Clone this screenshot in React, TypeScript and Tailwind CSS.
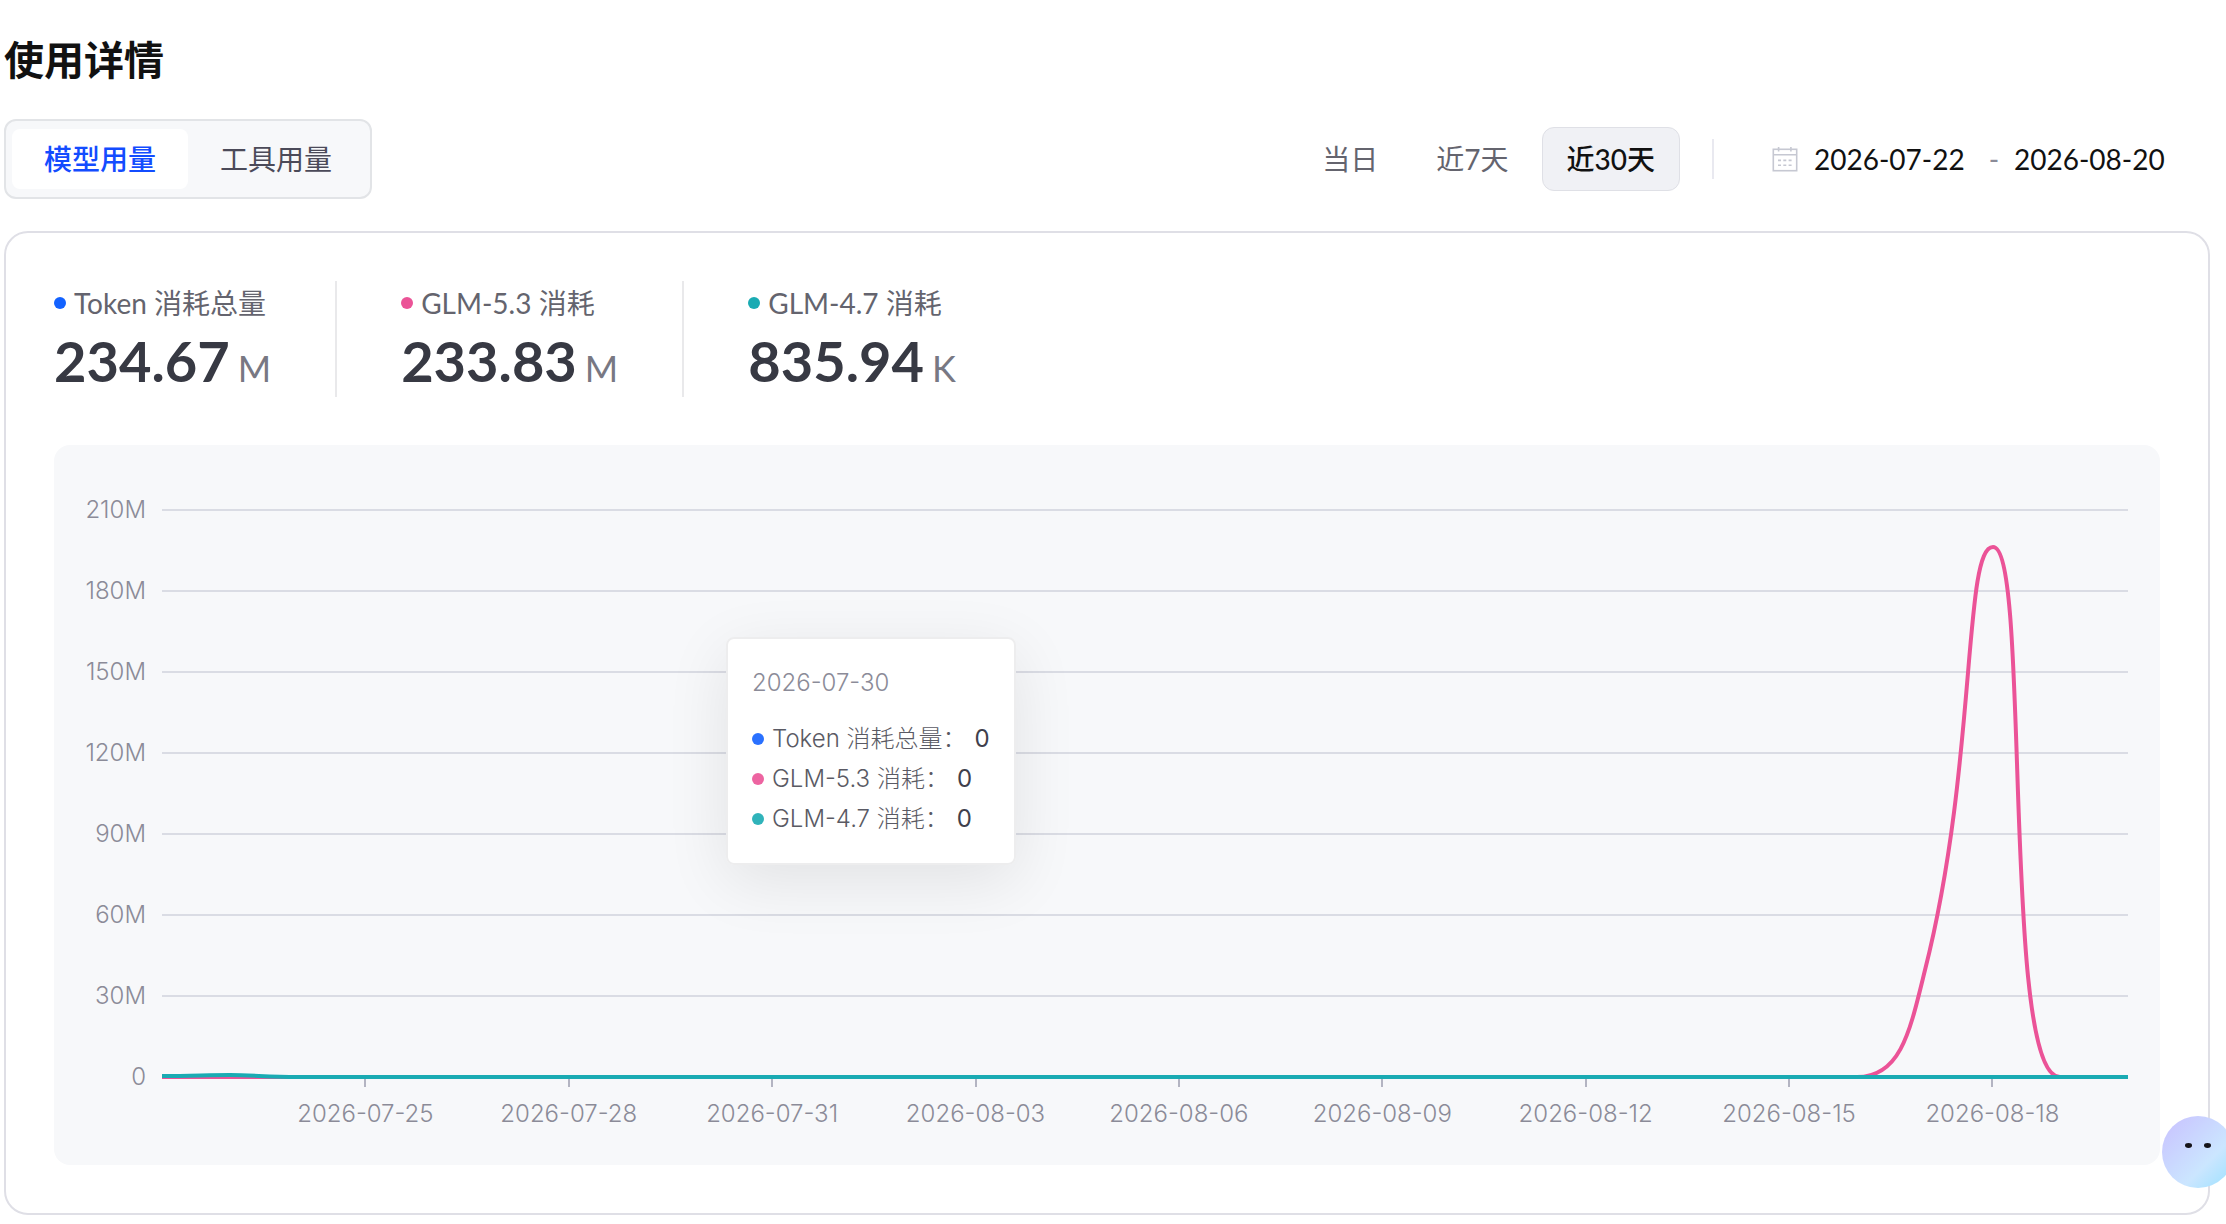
import React, { useState } from 'react';

interface Stat {
    label: string;
    value: string;
    unit: string;
    dot: string;
}

const STATS: Stat[] = [
    { label: 'Token 消耗总量', value: '234.67', unit: 'M', dot: 'bg-[#1362ff]' },
    { label: 'GLM-5.3 消耗', value: '233.83', unit: 'M', dot: 'bg-[#eb5397]' },
    { label: 'GLM-4.7 消耗', value: '835.94', unit: 'K', dot: 'bg-[#1aabb3]' },
];

const TABS = ['模型用量', '工具用量'];
const RANGES = ['当日', '近7天', '近30天'];

const Y_LABELS = ['210M', '180M', '150M', '120M', '90M', '60M', '30M', '0'];
const X_LABELS = [
    '2026-07-25',
    '2026-07-28',
    '2026-07-31',
    '2026-08-03',
    '2026-08-06',
    '2026-08-09',
    '2026-08-12',
    '2026-08-15',
    '2026-08-18',
];

function CalendarIcon() {
    return (
        <svg className="h-[26px] w-[26px] shrink-0" viewBox="0 0 26 26" fill="none" stroke="#c6c8d2" strokeWidth="1.6">
            <rect x="1.3" y="3.3" width="23.4" height="21.4" />
            <path d="M1.3 8.8h23.4M6.6 1v4.6M18.9 1v4.6" />
            <path d="M6 14.4h3M11.3 14.4h3M16.6 14.4h3M6 19.2h3M11.3 19.2h3M16.6 19.2h3" />
        </svg>
    );
}

function Assistant() {
    return (
        <button aria-label="智能助手" className="absolute -right-2 bottom-9 h-[72px] w-[72px]">
            <svg viewBox="0 0 72 72" className="h-full w-full">
                <defs>
                    <linearGradient id="face" x1="0.15" y1="0.15" x2="0.85" y2="0.85">
                        <stop offset="0" stopColor="#c9c9ff" />
                        <stop offset="0.7" stopColor="#cbe6ff" />
                        <stop offset="1" stopColor="#aee3ff" />
                    </linearGradient>
                </defs>
                <circle cx="36" cy="36" r="36" fill="url(#face)" />
                <ellipse cx="26.5" cy="29.5" rx="3.5" ry="2.4" fill="#15131a" />
                <ellipse cx="45.5" cy="29.5" rx="3.5" ry="2.4" fill="#15131a" />
            </svg>
        </button>
    );
}

function StatItem({ label, value, unit, dot }: Stat) {
    return (
        <div>
            <div className="flex items-center gap-2 text-[28px] leading-[44px] text-[#64646e]">
                <span className={`h-3 w-3 rounded-full ${dot}`} />
                {label}
            </div>
            <div className="flex h-[72px] items-baseline gap-2 leading-[72px]">
                <span className="text-[56px] font-bold text-[#373943]">{value}</span>
                <span className="text-[36px] text-[#787883]">{unit}</span>
            </div>
        </div>
    );
}

function Tooltip() {
    return (
        <div className="absolute left-[672px] top-48 rounded-lg border-2 border-[#ededee] bg-white/98 p-6 font-[Inter,'Noto_Sans_CJK_SC',sans-serif] text-[24px] leading-10 shadow-[0_16px_64px_rgba(0,0,0,0.09)]">
            <div className="mb-4 font-light text-[#8b8b98]">2026-07-30</div>
            {STATS.map((stat) => (
                <div key={stat.label} className="flex items-center whitespace-nowrap font-light text-[#5a5a64]">
                    <span className={`mr-2 h-3 w-3 rounded-full opacity-90 ${stat.dot}`} />
                    {stat.label}：
                    <span className="ml-2 font-normal text-[#40404c]">0</span>
                </div>
            ))}
        </div>
    );
}

function UsageChart() {
    return (
        <div className="relative mt-12 flex rounded-2xl bg-[#f7f8fa] pb-8 pl-4 pr-8 pt-[53px] font-[Inter,'Noto_Sans_CJK_SC',sans-serif] text-[24px] font-light text-[#8b8b98]">
            <div className="mr-4 flex h-[591px] w-[76px] shrink-0 flex-col justify-between text-right leading-6">
                {Y_LABELS.map((label) => (
                    <span key={label}>{label}</span>
                ))}
            </div>

            <div className="min-w-0 flex-1 pt-3">
                {/* One unit per day is 67.8 wide, 1M tokens is 2.7 high */}
                <svg className="block h-[567px] w-full overflow-visible" viewBox="0 0 1966 567" preserveAspectRatio="none" fill="none">
                    {Y_LABELS.map((label, i) => (
                        <path key={label} d={`M0 ${i * 81}H1966`} stroke="#dadce4" strokeWidth="2" vectorEffect="non-scaling-stroke" />
                    ))}
                    <path
                        d="M0 567H1695C1739 567 1748 521 1763 460C1815 255 1801 37 1831 37C1869 37 1839 567 1898 567H1966"
                        stroke="#eb5397"
                        strokeWidth="4"
                        vectorEffect="non-scaling-stroke"
                    />
                    <path
                        d="M0 566C30 566 45 565 68 565S105 567 136 567H1966"
                        stroke="#1aabb3"
                        strokeWidth="4"
                        vectorEffect="non-scaling-stroke"
                    />
                </svg>

                {/* A label every third day, centred on its day */}
                <div className="grid grid-cols-[1.5fr_repeat(9,3fr)_0.5fr] pt-0.5">
                    <span />
                    {X_LABELS.map((label) => (
                        <div key={label} className="flex flex-col items-center gap-2">
                            <span className="h-2 w-0.5 bg-[#b3b4c2]" />
                            <span className="leading-[38px]">{label}</span>
                        </div>
                    ))}
                </div>
            </div>

            <Tooltip />
        </div>
    );
}

export default function App() {
    const [tab, setTab] = useState('模型用量');
    const [range, setRange] = useState('近30天');
    const [startDate, setStartDate] = useState('2026-07-22');
    const [endDate, setEndDate] = useState('2026-08-20');

    return (
        <div className="relative overflow-hidden bg-white pb-[9px] pl-1 pr-4 pt-8 font-[Lato,'Noto_Sans_CJK_SC',sans-serif]">
            <h1 className="text-[40px] font-bold leading-[56px] text-[#111111]">使用详情</h1>

            <div className="mt-[31px] flex items-center justify-between">
                <div className="flex rounded-xl border-2 border-[#e2e4e7] bg-[#f7f8fa] px-1.5 py-2">
                    {TABS.map((item) => (
                        <button
                            key={item}
                            onClick={() => setTab(item)}
                            className={`h-[60px] rounded-lg px-8 text-[28px] ${
                                tab === item ? 'bg-white font-medium text-[#134cff]' : 'text-[#4b4a59]'
                            }`}
                        >
                            {item}
                        </button>
                    ))}
                </div>

                <div className="flex items-center text-[28px]">
                    <div className="flex gap-2">
                        {RANGES.map((item) => (
                            <button
                                key={item}
                                onClick={() => setRange(item)}
                                className={`h-16 rounded-xl border px-6 ${
                                    range === item
                                        ? 'border-[#dfe0e6] bg-[#f0f1f5] font-medium text-[#111111]'
                                        : 'border-transparent text-[#64646e]'
                                }`}
                            >
                                {item}
                            </button>
                        ))}
                    </div>
                    <span className="ml-8 h-10 w-0.5 bg-[#e9e9f0]" />
                    <div className="ml-5 flex items-center pl-[38px] pr-9">
                        <CalendarIcon />
                        <input
                            aria-label="开始日期"
                            value={startDate}
                            onChange={(e) => setStartDate(e.target.value)}
                            className="ml-4 w-40 text-[#111111] outline-none"
                        />
                        <span className="w-10 text-center text-[#8b8b98]">-</span>
                        <input
                            aria-label="结束日期"
                            value={endDate}
                            onChange={(e) => setEndDate(e.target.value)}
                            className="w-40 text-[#111111] outline-none"
                        />
                    </div>
                </div>
            </div>

            <div className="mt-8 rounded-3xl border-2 border-[#dfdfe6] p-12">
                <div className="flex gap-16">
                    {STATS.map((stat, i) => (
                        <React.Fragment key={stat.label}>
                            {i > 0 && <span className="w-0.5 bg-[#e9e9eb]" />}
                            <StatItem {...stat} />
                        </React.Fragment>
                    ))}
                </div>
                <UsageChart />
            </div>

            <Assistant />
        </div>
    );
}
